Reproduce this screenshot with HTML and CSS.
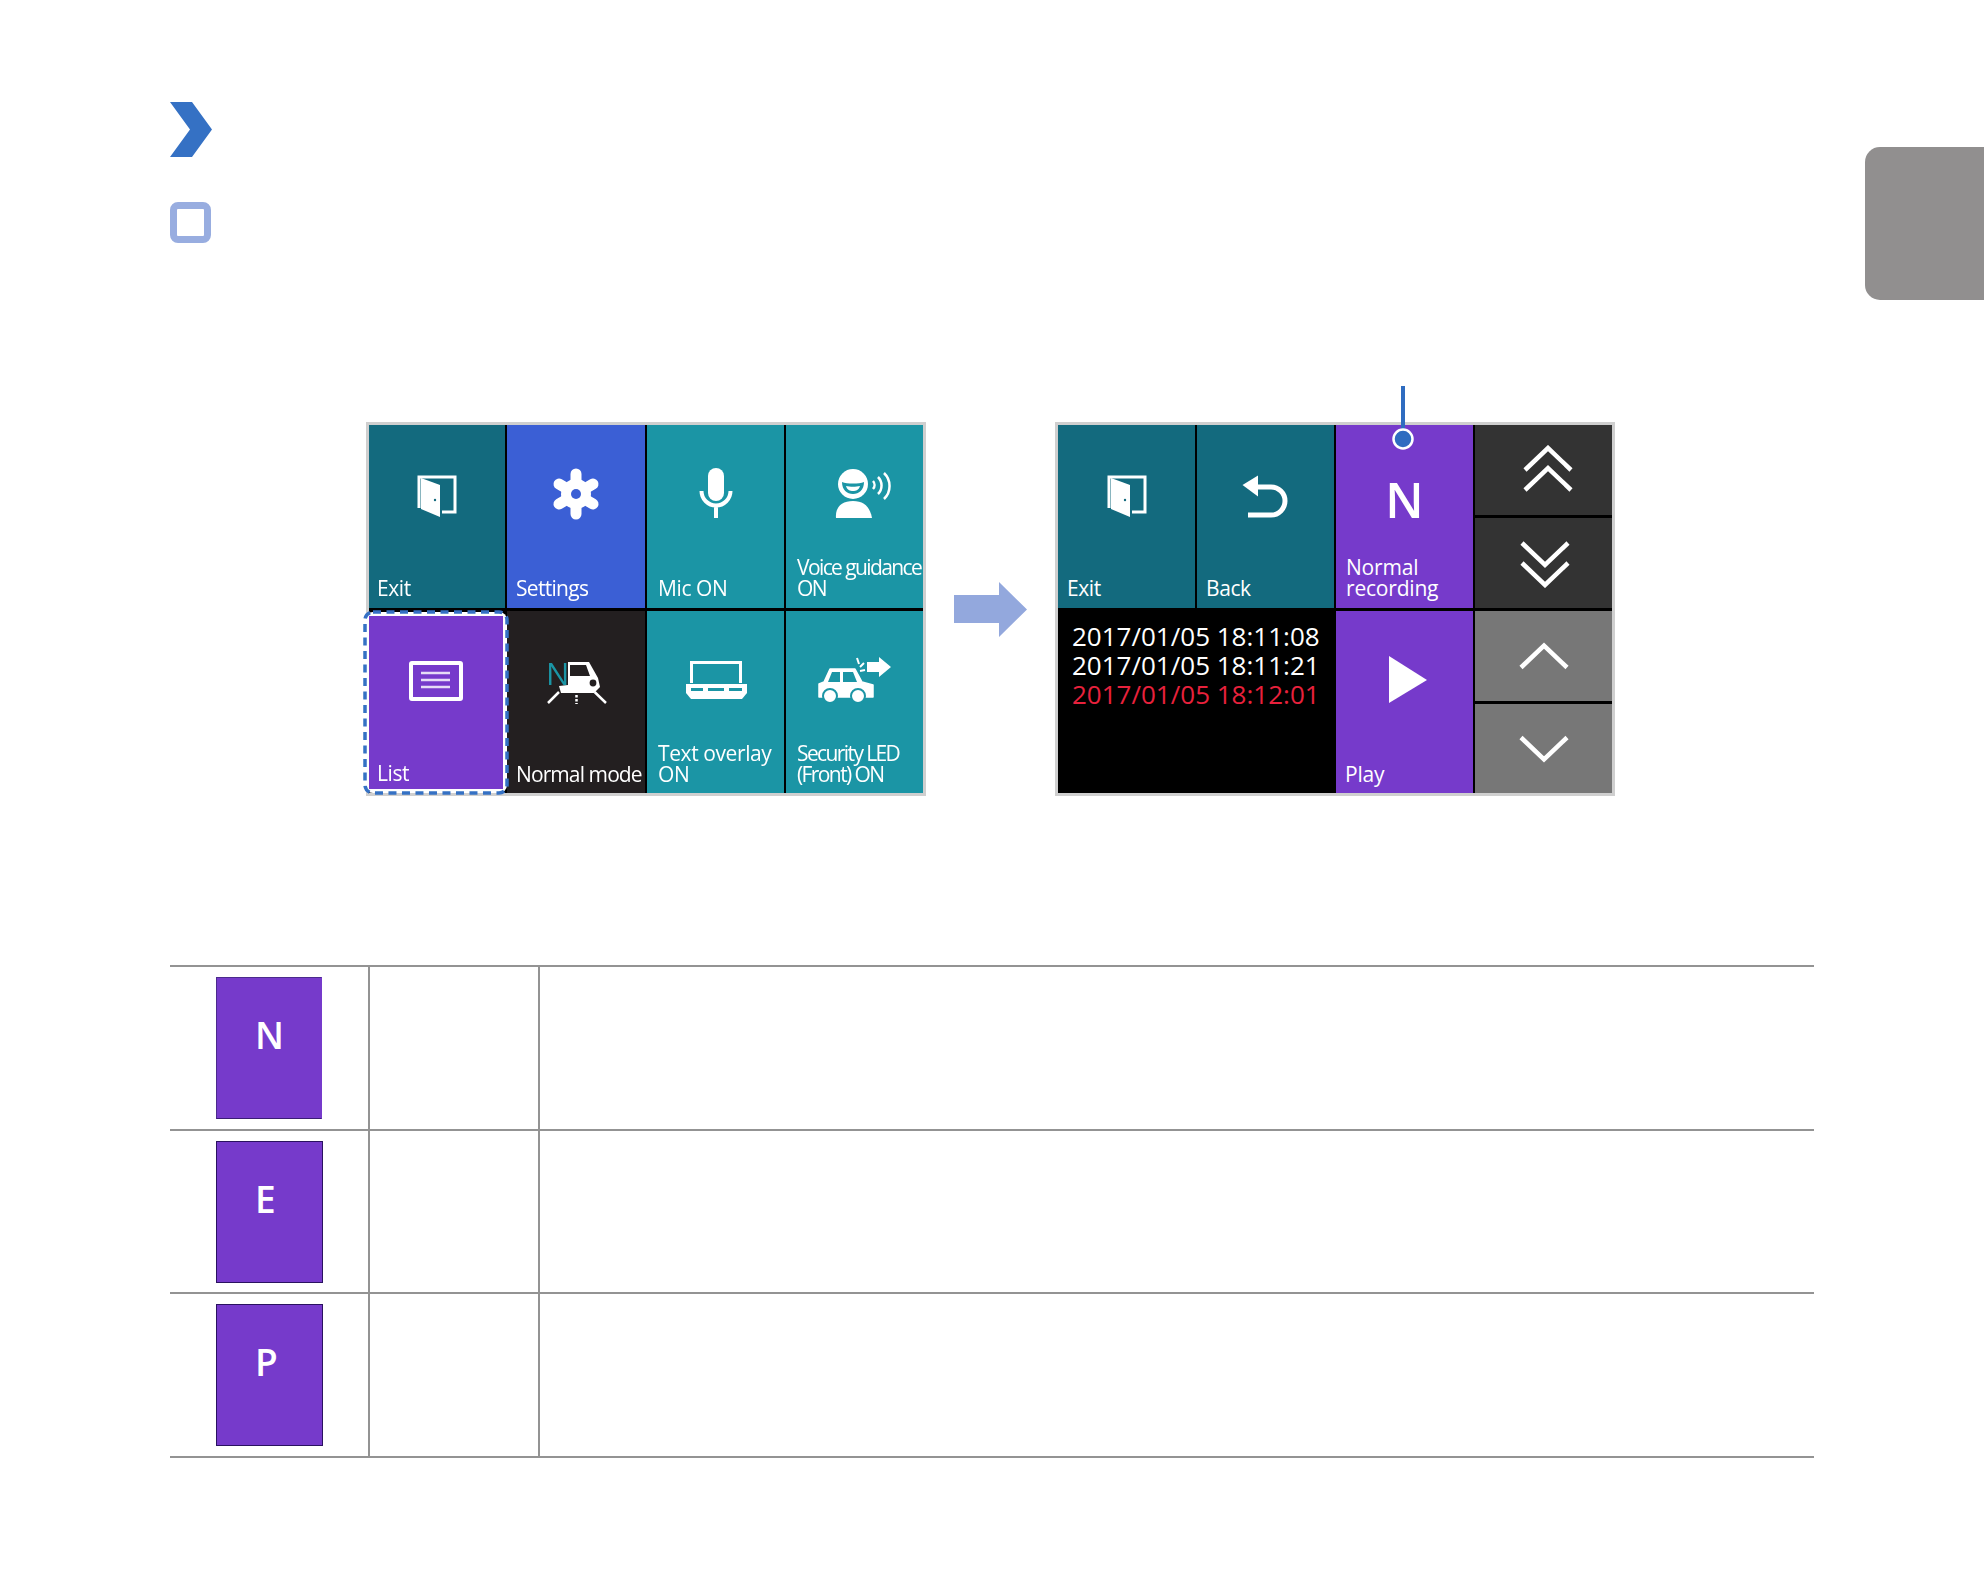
FILE: index.html
```html
<!DOCTYPE html>
<html lang="en">
<head>
<meta charset="utf-8">
<title>List</title>
<link rel="stylesheet" href="styles.css">
</head>
<body>
<div class="side-tab"></div>
<main class="page">
  <svg class="chevron" viewBox="0 0 42 55"><path d="M0 0H22L42 27.5L22 55H0L20 27.5Z"/></svg>
  <div class="square"></div>

  <section class="diagram">
    <div class="screen grid-menu">
      <div class="tile deep">
        <svg class="ico" viewBox="0 0 80 80"><path class="ln3" d="M22 53V22H58V57H45"/><path class="wf" d="M24 23L43 30V62L24 54Z"/><circle class="hole-deep" cx="38" cy="45" r="1.2"/></svg>
        <span class="label narrow">Exit</span>
      </div>
      <div class="tile blue">
        <svg class="ico" viewBox="0 0 80 80"><g class="petals"><path d="M40 39V19"/><path d="M40 39V59"/><path d="M40 39L57 29"/><path d="M40 39L23 29"/><path d="M40 39L57 49"/><path d="M40 39L23 49"/></g><circle class="wf" cx="40" cy="39" r="15"/><circle class="hole-blue" cx="40" cy="39" r="5"/></svg>
        <span class="label snug">Settings</span>
      </div>
      <div class="tile teal">
        <svg class="ico" viewBox="0 0 80 80"><rect class="wf" x="32" y="13" width="16" height="33" rx="8"/><path class="ln4" d="M25.5 36a14.5 14.5 0 0 0 29 0M40 50V63"/></svg>
        <span class="label inset">Mic ON</span>
      </div>
      <div class="tile teal">
        <svg class="ico" viewBox="0 0 80 80"><path class="wf" d="M21 63C20 52 27 46 38 46S55 52 57 63Z"/><circle class="wf" cx="38" cy="29" r="15"/><path class="hole-teal" d="M27 27C32 29 44 29 49 27C49 35 44 39 38 39S27 35 27 27Z"/><path class="wf" d="M31 31C35 32 41 32 45 31C44 35 41 36 38 36S32 35 31 31Z"/><path class="ln25" d="M58 26a6 6 0 0 1 0 8M63 22a12 12 0 0 1 0 17M69 18a18 18 0 0 1 0 26"/></svg>
        <span class="label inset tight">Voice guidance<br>ON</span>
      </div>
      <div class="slot">
        <svg class="ring" viewBox="0 0 146 185"><rect x="2" y="2" width="142" height="181" rx="8"/></svg>
        <div class="tile purple fill">
          <svg class="ico" viewBox="0 0 80 80"><rect class="ln4" x="15" y="22" width="50" height="36" rx="1"/><path class="ln25 soft" d="M25 32H54M25 39H54M25 46H54"/></svg>
          <span class="label narrow low">List</span>
        </div>
      </div>
      <div class="tile ink">
        <svg class="ico" viewBox="0 0 80 80"><path class="wf" d="M32 21H53L62 37L64 46L58 52H25L23 45L32 44Z"/><path class="hole-ink" d="M34 24H50L54 35H34Z"/><circle class="hole-ink" cx="57" cy="42" r="3.4"/><path class="ln25" d="M23 51L12 62M58.600 51L70 62"/><path class="dash" d="M40.500 54V63"/><rect class="hole-ink" x="10" y="20" width="22" height="24"/><text class="n-mark" x="10" y="44">N</text></svg>
        <span class="label snugger">Normal mode</span>
      </div>
      <div class="tile teal">
        <svg class="ico" viewBox="0 0 80 80"><path class="ln3" d="M15.500 42V21.500H64.500V42"/><path class="wf" d="M10 43H71V52L66 58H15L10 52Z"/><path class="hole-teal" d="M15 47H27V50H15ZM32 47H48V50H32ZM53 47H66V50H53Z"/></svg>
        <span class="label inset">Text overlay<br>ON</span>
      </div>
      <div class="tile teal">
        <svg class="ico" viewBox="0 0 80 80"><path class="wf rounded" d="M15 28H40L47 41L58 44V56H4V43L9 41Z"/><path class="hole-teal" d="M17 31H25V41H13ZM28 31H38L42 41H28Z"/><circle class="wf stroke-teal" cx="15" cy="55" r="7"/><circle class="wf stroke-teal" cx="43" cy="55" r="7"/><path class="wf" d="M52 21H64V16L76 26L64 36V31H52Z"/><path class="ln2" d="M42 17L44 23M50 29L45 30M49 22L45 26"/></svg>
        <span class="label inset tight">Security LED<br>(Front) ON</span>
      </div>
    </div>

    <svg class="flow-arrow" viewBox="0 0 73 55"><path d="M0 13H45V0L73 27.500L45 55V41H0Z"/></svg>

    <div class="screen grid-play">
      <svg class="pointer" viewBox="0 0 24 66"><path class="pointer-line" d="M12 0V46"/><circle class="pointer-dot" cx="12" cy="53" r="9.5"/></svg>
      <div class="tile deep">
        <svg class="ico" viewBox="0 0 80 80"><path class="ln3" d="M22 53V22H58V57H45"/><path class="wf" d="M24 23L43 30V62L24 54Z"/><circle class="hole-deep" cx="38" cy="45" r="1.2"/></svg>
        <span class="label">Exit</span>
      </div>
      <div class="tile deep">
        <svg class="ico" viewBox="0 0 80 80"><path class="ln45" d="M22 60H45A14 14 0 0 0 45 32H28"/><path class="wf" d="M16.500 30L32 20.500V41.500Z"/></svg>
        <span class="label">Back</span>
      </div>
      <div class="tile purple">
        <span class="big-letter">N</span>
        <span class="label inset-s">Normal<br>recording</span>
      </div>
      <div class="tile ash"><svg class="nav" viewBox="0 0 60 50"><path class="ln35" d="M7 25L30 3L53 25M7 45L30 23L53 45"/></svg></div>
      <div class="tile ash"><svg class="nav nudge" viewBox="0 0 60 50"><path class="ln35" d="M7 5L30 27L53 5M7 25L30 47L53 25"/></svg></div>
      <div class="log">
        <p>2017/01/05 18:11:08</p>
        <p>2017/01/05 18:11:21</p>
        <p class="alert">2017/01/05 18:12:01</p>
      </div>
      <div class="tile purple play-tile">
        <svg class="ico" viewBox="0 0 80 80"><path class="wf" d="M24 15L62 39L24 62Z"/></svg>
        <span class="label inset-p">Play</span>
      </div>
      <div class="tile steel"><svg class="nav flush" viewBox="0 0 60 50"><path class="ln35" d="M7 36.500L30 14.500L53 36.500"/></svg></div>
      <div class="tile steel"><svg class="nav flush" viewBox="0 0 60 50"><path class="ln35" d="M7 13.500L30 35.500L53 13.500"/></svg></div>
    </div>
  </section>

  <section class="modes">
    <div class="mode">
      <div class="mode-thumb"><div class="thumb-tile thumb-n">N</div></div>
      <div class="mode-name"></div>
      <div class="mode-text"></div>
    </div>
    <div class="mode mode-short">
      <div class="mode-thumb"><div class="thumb-tile">E</div></div>
      <div class="mode-name"></div>
      <div class="mode-text"></div>
    </div>
    <div class="mode mode-last">
      <div class="mode-thumb"><div class="thumb-tile">P</div></div>
      <div class="mode-name"></div>
      <div class="mode-text"></div>
    </div>
  </section>
</main>
</body>
</html>
```

FILE: styles.css
```css
* { box-sizing: border-box; }
html, body { margin: 0; padding: 0; background: #fff; }
body { position: relative; height: 1587px; overflow: hidden; font-family: "Open Sans", "Noto Sans", sans-serif; }

.side-tab { position: absolute; left: 1865px; top: 147px; width: 119px; height: 153px; background: #918f8f; border-radius: 15px 0 0 15px; }

.page { padding: 102px 170px 0; }
.chevron { display: block; width: 42px; height: 55px; fill: #3571c4; }
.square { width: 41px; height: 41px; margin-top: 45px; border: 7px solid #98ade0; border-radius: 8px; }

.diagram { display: flex; align-items: center; margin-top: 179px; padding-left: 196px; }

.screen { position: relative; display: grid; flex: none; width: 560px; height: 374px; gap: 3px 2px; background: #000; border: 3px solid #cfcfcf; filter: blur(0.4px); }
.grid-menu { grid-template-columns: 136px 138px 137px 137px; grid-template-rows: 183px 182px; }
.grid-play { grid-template-columns: repeat(4, 137px); grid-template-rows: 90px 90px 90px 1fr; }

.tile { position: relative; display: flex; flex-direction: column; align-items: center; min-width: 0; min-height: 0; color: #fff; }
.deep { background: #136a7e; }
.teal { background: #1b95a5; }
.blue { background: #3b5fd5; }
.ink { background: #231f20; }
.purple { background: #763acb; }
.ash { background: #333; justify-content: center; }
.steel { background: #777; justify-content: center; }

.grid-play .tile:nth-child(2),
.grid-play .tile:nth-child(3),
.grid-play .tile:nth-child(4) { grid-row: span 2; }
.grid-play .play-tile { grid-row: span 2; }
.log { grid-column: span 2; grid-row: span 2; padding: 11px 0 0 14px; color: #fff; font-size: 26px; line-height: 29px; white-space: nowrap; }
.log p { margin: 0; }
.log .alert { color: #e8213c; }

.ico { display: block; flex: none; width: 80px; height: 80px; margin-top: 30px; }
.fill .ico { margin-top: 25px; }

.label { width: 100%; margin-top: auto; padding: 0 0 9px 9px; font-size: 21px; line-height: 21px; letter-spacing: -0.4px; white-space: nowrap; }
.grid-menu > .tile:nth-child(n+5) .label,
.play-tile .label { padding-bottom: 8px; }
.narrow { padding-left: 8px; }
.low { padding-bottom: 5px; }
.snug { letter-spacing: -0.7px; }
.snugger { letter-spacing: -0.9px; }
.inset { padding-left: 11px; }
.inset-s { padding-left: 10px; letter-spacing: -0.2px; }
.inset-p { padding-left: 9px; letter-spacing: -0.2px; }
.tight { letter-spacing: -1.6px; }
.big-letter { margin-top: 46px; font-size: 49px; line-height: 56px; font-weight: 600; }

.slot { position: relative; z-index: 1; display: flex; min-width: 0; min-height: 0; padding: 5px 2px 4px 0; }
.slot .tile { flex: 1; }
.ring { position: absolute; left: -6px; top: -1px; width: 146px; height: 185px; }
.ring rect { fill: #fff; stroke: #3571c4; stroke-width: 3.5; stroke-dasharray: 8 5.5; }

.nav { display: block; width: 60px; height: 50px; margin-left: 8px; }
.nudge { margin-left: 2px; }
.flush { margin-left: 0; }

.wf { fill: #fff; }
.rounded { stroke: #fff; stroke-width: 1.5; stroke-linejoin: round; }
.ln2, .ln25, .ln3, .ln35, .ln4, .ln45, .petals, .dash { fill: none; stroke: #fff; }
.ln2 { stroke-width: 2; }
.ln25 { stroke-width: 2.5; }
.ln3 { stroke-width: 3; }
.ln35 { stroke-width: 4.5; }
.ln4 { stroke-width: 4; }
.ln45 { stroke-width: 5; }
.soft { stroke: #e6dcf6; }
.petals { stroke-width: 11; stroke-linecap: round; }
.dash { stroke-width: 2.5; stroke-dasharray: 2.5 1.5; }
.hole-deep { fill: #136a7e; }
.hole-blue { fill: #3b5fd5; }
.hole-teal { fill: #1b95a5; }
.hole-ink { fill: #231f20; }
.stroke-teal { stroke: #1b95a5; stroke-width: 2; }
.n-mark { fill: #1b95a5; font-family: "Open Sans", sans-serif; font-size: 31px; }

.flow-arrow { display: block; flex: none; width: 73px; height: 55px; margin: 0 28px 0 28px; fill: #93a8dd; }

.pointer { position: absolute; z-index: 2; left: 333px; top: -39px; width: 24px; height: 66px; overflow: visible; }
.pointer-line { fill: none; stroke: #2f6cc0; stroke-width: 4; }
.pointer-dot { fill: #2f6cc0; stroke: #fff; stroke-width: 2.5; }

.modes { width: 1644px; margin-top: 169px; border-bottom: 2px solid #939393; }
.mode { display: grid; grid-template-columns: 198px 170px 1fr; height: 164px; border-top: 2px solid #939393; }
.mode-short { height: 163px; }
.mode-last { height: 164px; }
.mode-thumb { padding: 10px 0 0 46px; }
.mode-name, .mode-text { border-left: 2px solid #939393; }
.thumb-tile { width: 107px; height: 142px; padding: 32px 0 0 38px; background: #763acb; border: 1px solid #2a1260; color: #fff; font-size: 37px; line-height: 50px; font-weight: 600; }
.thumb-n { width: 106px; border-color: #4b2a8c #763acb #3a1d75 #4b2a8c; }
```
